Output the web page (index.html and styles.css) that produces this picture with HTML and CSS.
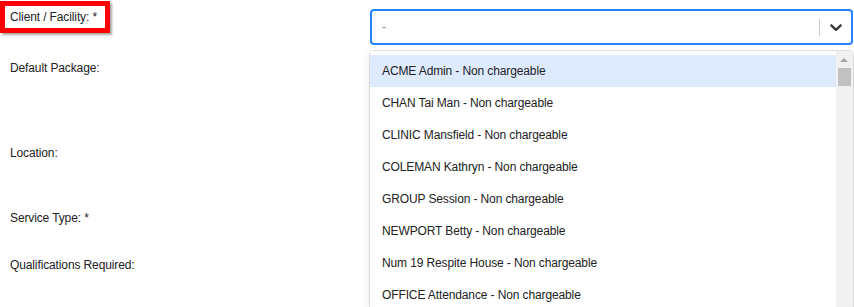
FILE: index.html
```html
<!DOCTYPE html>
<html lang="en">
<head>
  <meta charset="UTF-8" />
  <title>Booking - Client / Facility</title>
  <link rel="stylesheet" href="styles.css">
</head>
<body>
  <form class="booking-form">
    <div class="form-row row-client">
      <label class="field-label marked">Client / Facility: *</label>
      <div class="field">
        <div class="select-box focused">
          <div class="select-value">-</div>
          <span class="select-divider"></span>
          <span class="select-arrow">
            <svg width="20" height="20" viewBox="0 0 20 20"><path d="M4.516 7.548c0.436-0.446 1.043-0.481 1.576 0l3.908 3.747 3.908-3.747c0.533-0.481 1.141-0.446 1.574 0 0.436 0.445 0.408 1.197 0 1.615-0.406 0.418-4.695 4.502-4.695 4.502-0.217 0.223-0.502 0.335-0.787 0.335s-0.57-0.112-0.789-0.335c0 0-4.287-4.084-4.695-4.502s-0.436-1.17 0-1.615z" fill="currentColor"/></svg>
          </span>
        </div>

        <div class="select-menu">
          <ul class="option-list">
            <li class="option focused">ACME Admin - Non chargeable</li>
            <li class="option">CHAN Tai Man - Non chargeable</li>
            <li class="option">CLINIC Mansfield - Non chargeable</li>
            <li class="option">COLEMAN Kathryn - Non chargeable</li>
            <li class="option">GROUP Session - Non chargeable</li>
            <li class="option">NEWPORT Betty - Non chargeable</li>
            <li class="option">Num 19 Respite House - Non chargeable</li>
            <li class="option">OFFICE Attendance - Non chargeable</li>
          </ul>
          <div class="menu-scrollbar">
            <span class="scroll-up"></span>
            <span class="scroll-thumb"></span>
          </div>
        </div>
      </div>
    </div>

    <div class="form-row row-package">
      <label class="field-label">Default Package:</label>
      <div class="field"></div>
    </div>

    <div class="form-row row-location">
      <label class="field-label">Location:</label>
      <div class="field"></div>
    </div>

    <div class="form-row row-service">
      <label class="field-label">Service Type: *</label>
      <div class="field"></div>
    </div>

    <div class="form-row row-quals">
      <label class="field-label">Qualifications Required:</label>
      <div class="field"></div>
    </div>
  </form>
</body>
</html>
```

FILE: styles.css
```css
body {
  margin: 0;
  background: #fff;
  font-family: "Liberation Sans", Arial, sans-serif;
  font-size: 12px;
  letter-spacing: -0.12px;
  color: #222;
}

.booking-form {
  display: flex;
  flex-direction: column;
  width: 854px;
  height: 307px;
  overflow: hidden;
}

.form-row {
  display: grid;
  grid-template-columns: 370px 483px;
}

.row-client { height: 51px; }
.row-package { height: 85px; }
.row-location { height: 65px; }
.row-service { height: 47px; }
.row-quals { height: 59px; }

.field-label {
  display: block;
  line-height: 14px;
  padding: 10px 0 0 10px;
  color: #222;
}

/* red annotation frame round the label */
.field-label.marked {
  justify-self: start;
  align-self: start;
  margin-top: 1px;
  padding: 4px 8px 4px 5px;
  border: 5px solid #f00;
  box-shadow: 2px 2px 2px rgba(0, 0, 0, 0.35);
}

.field {
  position: relative;
}

.select-box {
  display: flex;
  align-items: center;
  box-sizing: border-box;
  height: 36px;
  margin-top: 9px;
  border: 2px solid #2684ff;
  border-radius: 4px;
  background: #fff;
}

.select-value {
  flex: 1;
  padding-left: 10px;
  color: #808080;
}

.select-divider {
  width: 1px;
  height: 17px;
  background: #ccc;
}

.select-arrow {
  display: flex;
  padding: 0 5px 0 6px;
  color: #333;
}

.select-menu {
  position: absolute;
  top: 51px;
  left: 0;
  right: 0;
  z-index: 10;
  display: flex;
  height: 256px;
  background: #fff;
  border-radius: 4px 4px 0 0;
  box-shadow: 0 0 0 1px rgba(0, 0, 0, 0.1), 0 4px 11px rgba(0, 0, 0, 0.1);
  overflow: hidden;
}

.option-list {
  flex: 1;
  list-style: none;
  margin: 0;
  padding: 4px 0 0 0;
}

.option {
  line-height: 14px;
  padding: 9px 12px;
  color: #222;
}

.option.focused {
  background: #deebff;
}

.menu-scrollbar {
  position: relative;
  width: 17px;
  background: #f1f1f1;
}

.scroll-up {
  position: absolute;
  top: 7px;
  left: 4px;
  width: 0;
  height: 0;
  border-left: 4px solid transparent;
  border-right: 4px solid transparent;
  border-bottom: 4px solid #a3a3a3;
}

.scroll-thumb {
  position: absolute;
  top: 17px;
  left: 2px;
  width: 13px;
  height: 18px;
  background: #c1c1c1;
}
```
